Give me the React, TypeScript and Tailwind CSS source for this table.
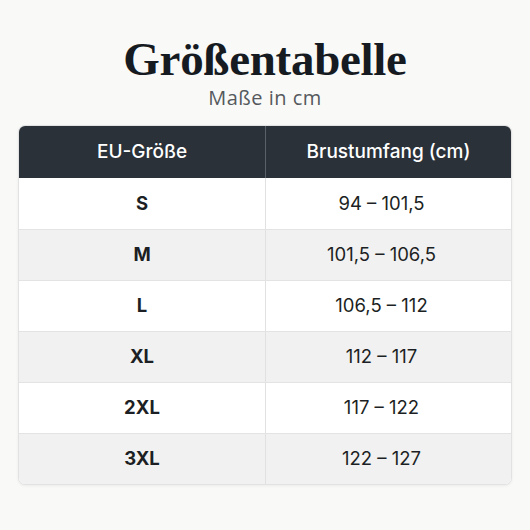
import React from "react";

const rows = [
  ["S", "94 – 101,5"],
  ["M", "101,5 – 106,5"],
  ["L", "106,5 – 112"],
  ["XL", "112 – 117"],
  ["2XL", "117 – 122"],
  ["3XL", "122 – 127"],
];

export default function App() {
  return (
    <div className="w-[530px] h-[530px] bg-[#f9f9f8] flex flex-col items-center pt-[32px]">
      <h1
        className="text-[47px] leading-[54px] font-bold text-[#161b22] tracking-[-0.3px]"
        style={{ fontFamily: '"Liberation Serif", "DejaVu Serif", serif' }}
      >
        Größentabelle
      </h1>
      <p
        className="text-[20px] leading-[26px] text-[#55595d] tracking-[0.5px] mt-[-1px]"
        style={{ fontFamily: '"Open Sans", "Noto Sans", sans-serif' }}
      >
        Maße in cm
      </p>
      <div
        className="mt-[14px] w-[494px] rounded-[7px] overflow-hidden border border-[#e2e2e2] bg-white shadow-[0_1px_3px_rgba(0,0,0,0.06)]"
        style={{ fontFamily: 'Inter, "Noto Sans", sans-serif' }}
      >
        <div className="grid grid-cols-[247px_1fr] h-[52px] bg-[#2a3138] text-white text-[19px] font-medium">
          <div className="flex items-center justify-center border-r border-[#5a6066]">EU-Größe</div>
          <div className="flex items-center justify-center">Brustumfang (cm)</div>
        </div>
        {rows.map(([s, v], i) => (
          <div
            key={s}
            className={`grid grid-cols-[247px_1fr] h-[51px] text-[18.5px] text-[#1c1f23] ${
              i % 2 === 1 ? "bg-[#f1f1f1]" : "bg-white"
            } ${i > 0 ? "border-t border-[#e3e3e3]" : ""}`}
          >
            <div className="flex items-center justify-center font-bold border-r border-[#e1e1e1]">{s}</div>
            <div className="flex items-center justify-center pr-[14px]">{v}</div>
          </div>
        ))}
      </div>
    </div>
  );
}
